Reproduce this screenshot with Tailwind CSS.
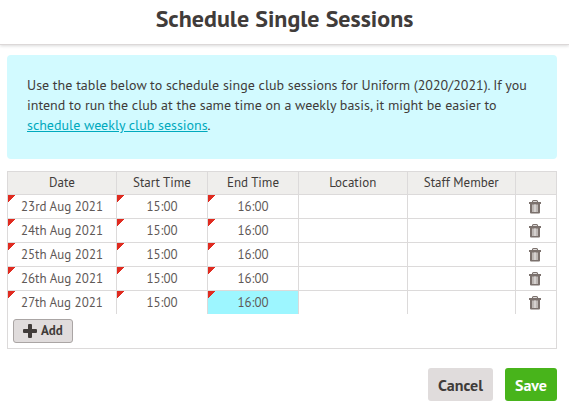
<!doctype html>
<html lang="en">
<head>
    <title>Schedule Single Sessions</title>
    <meta charset="UTF-8">
    <meta name="viewport" content="width=device-width, initial-scale=1.0">
    <script src="https://cdn.jsdelivr.net/npm/@tailwindcss/browser@4"></script>
</head>
<body class="bg-white font-['PT_Sans','Noto_Sans',sans-serif] text-[14px] text-[#413c3a]">

<!-- Shared icons -->
<svg class="hidden">
    <symbol id="trash" viewBox="0 0 12 14">
        <path d="M3.5 2.5V1.6Q3.5.6 4.5.6h3q1 0 1 1v.9" fill="none" stroke="#7b716d" stroke-width="1.1" />
        <path d="M0 2h12v2H0z" fill="#7b716d" />
        <path d="M1 4h10v8.500q0 1-1 1H2q-1 0-1-1z" fill="#7b716d" />
        <path d="M3 4.500h6V12H3z" fill="#bdb7b4" />
        <path d="M5 4.500h2V12H5z" fill="#d5d1cf" />
    </symbol>
</svg>

<!-- Header -->
<header class="h-[45px] border-b border-[#dcd8d8] pt-1 text-center shadow-[0_1px_3px_rgba(0,0,0,0.15)]">
    <h1 class="text-[24px] leading-[30px] font-bold">Schedule Single Sessions</h1>
</header>

<main class="pt-[10px] pr-3 pl-[7px]">
    <!-- Help text -->
    <div class="rounded bg-[#d2faff] px-5 pt-5 pb-6">
        <p class="leading-5">
            Use the table below to schedule singe club sessions for Uniform (2020/2021). If you intend to run the club at the same time on a weekly basis, it might be easier to <a href="#" class="text-[#00a9bd] underline">schedule weekly club sessions</a>.
        </p>
    </div>

    <!-- Sessions -->
    <div class="mt-3 border border-[#dcdada]">
        <table class="w-full table-fixed border-separate border-spacing-0 text-center text-[13px] leading-4">
            <colgroup>
                <col class="w-[109px]">
                <col class="w-[91px]">
                <col class="w-[91px]">
                <col>
                <col>
                <col class="w-10">
            </colgroup>
            <thead class="bg-[#efeeec] [&_:is(th,td)]:h-[23px] [&_:is(th,td)]:border-b [&_:is(th,td)]:border-[#dcdada] [&_th]:border-r [&_th]:font-normal">
                <tr>
                    <th>Date</th>
                    <th>Start Time</th>
                    <th>End Time</th>
                    <th>Location</th>
                    <th>Staff Member</th>
                    <td></td>
                </tr>
            </thead>
            <tbody class="text-[#5f5957] [&_td]:h-6 [&_tr:last-child>td]:h-[23px] [&_td]:border-[#dcdada] [&_td:last-child]:pr-0.5 [&_td:not(:last-child)]:border-r [&_tr:not(:last-child)>td]:border-b [&_td:nth-child(-n+3)]:bg-[linear-gradient(135deg,#e02b20_5px,transparent_5px)]">
                <tr>
                    <td>23rd Aug 2021</td>
                    <td>15:00</td>
                    <td>16:00</td>
                    <td></td>
                    <td></td>
                    <td><button aria-label="Delete 23rd Aug 2021" class="block mx-auto"><svg class="h-[14px] w-3"><use href="#trash" /></svg></button></td>
                </tr>
                <tr>
                    <td>24th Aug 2021</td>
                    <td>15:00</td>
                    <td>16:00</td>
                    <td></td>
                    <td></td>
                    <td><button aria-label="Delete 24th Aug 2021" class="block mx-auto"><svg class="h-[14px] w-3"><use href="#trash" /></svg></button></td>
                </tr>
                <tr>
                    <td>25th Aug 2021</td>
                    <td>15:00</td>
                    <td>16:00</td>
                    <td></td>
                    <td></td>
                    <td><button aria-label="Delete 25th Aug 2021" class="block mx-auto"><svg class="h-[14px] w-3"><use href="#trash" /></svg></button></td>
                </tr>
                <tr>
                    <td>26th Aug 2021</td>
                    <td>15:00</td>
                    <td>16:00</td>
                    <td></td>
                    <td></td>
                    <td><button aria-label="Delete 26th Aug 2021" class="block mx-auto"><svg class="h-[14px] w-3"><use href="#trash" /></svg></button></td>
                </tr>
                <tr>
                    <td>27th Aug 2021</td>
                    <td>15:00</td>
                    <td class="bg-[#9df6ff]">16:00</td>
                    <td></td>
                    <td></td>
                    <td><button aria-label="Delete 27th Aug 2021" class="block mx-auto"><svg class="h-[14px] w-3"><use href="#trash" /></svg></button></td>
                </tr>
            </tbody>
        </table>
        <div class="p-[5px]">
            <button class="flex h-6 items-center gap-1 rounded-[3px] border border-[#aaa5a4] bg-[#e0dcdc] px-[9px] text-[13px] font-bold">
                <svg class="h-[14px] w-[14px]" viewBox="0 0 14 14" fill="#413c3a"><path d="M5 1q0-1 1-1h2q1 0 1 1v4h4q1 0 1 1v2q0 1-1 1H9v4q0 1-1 1H6q-1 0-1-1V9H1Q0 9 0 8V6q0-1 1-1h4z" /></svg>
                Add
            </button>
        </div>
    </div>

    <!-- Actions -->
    <div class="mt-[19px] flex justify-end gap-3">
        <button class="h-[33px] rounded-[3px] bg-[#e0dcdc] px-[10px] text-[16px] font-bold">Cancel</button>
        <button class="h-[33px] rounded-[3px] bg-[#48b41b] px-[10px] text-[16px] font-bold text-white">Save</button>
    </div>
</main>
</body>
</html>
